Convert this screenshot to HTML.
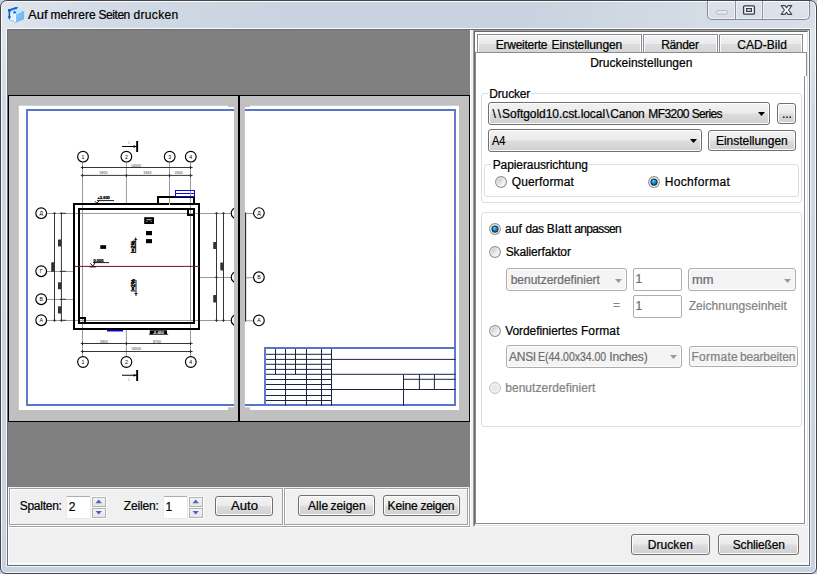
<!DOCTYPE html>
<html lang="de"><head><meta charset="utf-8"><title>Auf mehrere Seiten drucken</title>
<style>
html,body{margin:0;padding:0}
body{width:817px;height:574px;overflow:hidden;position:relative;background:#c3cfdc;font-family:"Liberation Sans",sans-serif;font-size:12px;line-height:14px;color:#000}
body>div,body>span,body>svg{position:absolute;box-sizing:content-box}
.t{white-space:pre;line-height:14px;-webkit-text-stroke:.22px currentColor}
.frame{left:0;top:0;width:815px;height:572px;border:1px solid #42464c;border-radius:7px 7px 6px 6px;background:linear-gradient(#dfe5ec 0,#dfe5ec 30px,#cfd9e5 110px,#c8d3e0 100%);box-shadow:inset 0 0 0 1px rgba(255,255,255,.85)}
.tb{left:2px;top:2px;width:813px;height:26px;border-radius:5px 5px 0 0;background:linear-gradient(90deg,#e0e6ed 0,#d2dbe6 90px,#c8d3df 300px,#c8d3df 520px,#d4dce6 700px,#d8dfe8 813px)}
.btn{border:1px solid #707070;border-radius:3px;background:linear-gradient(#f2f2f2 0,#ebebeb 48%,#dddddd 52%,#cfcfcf 100%);box-shadow:inset 0 0 0 1px rgba(255,255,255,.9)}
.btn.dis{border-color:#adadad;background:#f4f4f4;box-shadow:inset 0 0 0 1px #fcfcfc}
.tab{border:1px solid #898c95;border-bottom:none;background:linear-gradient(#f2f2f2 0,#ebebeb 50%,#dddddd 52%,#d5d5d5 100%);box-shadow:inset 1px 1px 0 rgba(255,255,255,.9),inset -1px 0 0 rgba(255,255,255,.9)}
.sp{width:12px;height:8px;border:1px solid #b2b2b2;background:linear-gradient(#f3f3f3,#e6e6e6)}

</style></head>
<body>
<svg width="0" height="0" style="position:absolute"><defs>
<linearGradient id="rg" x1="0" y1="0" x2="1" y2="1"><stop offset="0" stop-color="#b9c0c6"/><stop offset=".5" stop-color="#e2e5e8"/><stop offset="1" stop-color="#ffffff"/></linearGradient>
<radialGradient id="rb" cx=".4" cy=".3" r=".75"><stop offset="0" stop-color="#a8e6fa"/><stop offset=".28" stop-color="#2fa6e2"/><stop offset=".7" stop-color="#1b78b8"/><stop offset="1" stop-color="#154a78"/></radialGradient>
</defs></svg>
<div class="frame"></div>
<div class="tb"></div>
<div style="left:6px;top:28px;width:803px;height:537px;border:1px solid rgba(255,255,255,.75);"></div>
<div style="left:7px;top:29px;width:801px;height:535px;border:1px solid #6b6f76;background:#f0f0f0;"></div>
<div style="left:8px;top:30px;width:799px;height:533px;border:1px solid #fff;border-top:none;"></div>
<svg style="left:0;top:0" width="34" height="28" viewBox="0 0 34 28">
<defs><linearGradient id="ic1" x1="0" y1="0" x2="1" y2="0"><stop offset="0" stop-color="#f4faff"/><stop offset="1" stop-color="#cfe7ff"/></linearGradient>
<linearGradient id="ic2" x1="0" y1="0" x2="1" y2="1"><stop offset="0" stop-color="#8ccaff"/><stop offset="1" stop-color="#62b2fb"/></linearGradient></defs>
<path d="M10.3,11.8L19,7.6L24.1,10.1L15.7,14.3Z" fill="#c4e3ff"/>
<path d="M10.3,11.8L15.7,14.3V22.2L10.3,19.7Z" fill="url(#ic1)"/>
<path d="M15.7,14.3L24.1,10.1V18.5L15.7,22.2Z" fill="url(#ic2)"/>
<path d="M10.4,20L15.7,22.5L24,18.8" fill="none" stroke="#7f93ab" stroke-width=".8" opacity=".7"/>
<path d="M15.3,14.4V22" stroke="#fff" stroke-width="1"/>
<path d="M15.7,14.1L24,10" stroke="#e8f4ff" stroke-width=".8"/>
<path d="M9.4,10V18" stroke="#0b62c6" stroke-width="1.6"/>
<path d="M7.8,16.2H11L9.4,19.9Z" fill="#0b62c6"/>
<path d="M8.6,10.4L16.5,7.8" stroke="#0b62c6" stroke-width="1.8"/>
<path d="M8,9.2h3.2v2.2H8Z" fill="#0b62c6"/>
<path d="M14.4,7.3L18.1,6.9L16.2,9.5Z" fill="#0b62c6"/>
<path d="M12.9,13.3H16.6L14.4,10.8Z" fill="#0b62c6"/>
</svg>

<span class="t" style="left:28.4px;top:8px;transform:scaleX(1.0879);transform-origin:0 0;">Auf</span>
<span class="t" style="left:50.5px;top:8px;letter-spacing:0.085px;">mehrere</span>
<span class="t" style="left:98.5px;top:8px;letter-spacing:-0.446px;">Seiten</span>
<span class="t" style="left:133.5px;top:8px;letter-spacing:0.333px;">drucken</span>
<div style="left:707px;top:1px;width:101px;height:18px;border:1px solid #848b96;border-top:none;border-radius:0 0 5px 5px;box-shadow:inset 0 0 0 1px rgba(255,255,255,.55);background:linear-gradient(rgba(255,255,255,.18),rgba(255,255,255,.05))"></div>
<div style="left:735px;top:1px;width:1px;height:18px;background:#8d949e;box-shadow:1px 0 0 rgba(255,255,255,.5),-1px 0 0 rgba(255,255,255,.5)"></div>
<div style="left:762px;top:1px;width:1px;height:18px;background:#8d949e;box-shadow:1px 0 0 rgba(255,255,255,.5),-1px 0 0 rgba(255,255,255,.5)"></div>
<svg style="left:707px;top:0" width="103" height="20" viewBox="707 0 103 20">
<rect x="716.5" y="10.5" width="11" height="3.6" rx="1" fill="#e6eaef" stroke="#b3bac4" stroke-width="1"/>
<rect x="743.6" y="5.8" width="10.8" height="8.4" rx="1" fill="#f4f6f8" stroke="#363b46" stroke-width="1.3"/>
<rect x="746.6" y="8.6" width="4.8" height="2.8" fill="#e9ecf0" stroke="#363b46" stroke-width="1.2"/>
<path d="M781.2,5.6h3.8l1.5,2.3l1.5,-2.3h3.8l-3.3,4.4l3.3,4.4h-3.8l-1.5,-2.3l-1.5,2.3h-3.8l3.3,-4.4Z" fill="#fdfdfd" stroke="#40464f" stroke-width="1.1" stroke-linejoin="round"/>
</svg>

<div style="left:7px;top:29px;width:461px;height:496px;border:1px solid #a0a0a0;border-top-color:transparent;border-left-color:transparent;"></div>
<div style="left:8px;top:30px;width:461px;height:496px;border:1px solid #fff;"></div>
<div style="left:8px;top:30px;width:462px;height:457px;background:#808080;"></div>
<div style="left:8px;top:95px;width:460px;height:325px;border:1px solid #000;background:#c0c0c0;"></div>
<div style="left:238px;top:95px;width:2px;height:327px;background:#000;"></div>
<svg style="left:9px;top:96px" width="460" height="325" viewBox="9 96 460 325" font-family="'Liberation Sans',sans-serif">
<defs><clipPath id="p1"><polygon points="18.8,105.7 228,105.7 228,107 234,107 234,407.2 228,407.2 228,410.1 18.8,410.1"/></clipPath><clipPath id="p2"><polygon points="244.9,107 250,107 250,105.7 459,105.7 459,410.1 250,410.1 250,407.2 244.9,407.2"/></clipPath></defs>
<g clip-path="url(#p1)">
<rect x="18" y="105" width="217" height="306" fill="#fff"/>
<path d="M235,110H27V405H235" fill="none" stroke="#5973c9" stroke-width="1.9"/>
<path d="M82.5,162.3L82.5,356.5" stroke="#9a9a9a" stroke-width="1" fill="none"/>
<path d="M190.5,162.3L190.5,356.5" stroke="#9a9a9a" stroke-width="1" fill="none"/>
<path d="M126.4,162.3L126.4,203" stroke="#9a9a9a" stroke-width="1" fill="none"/>
<path d="M126.4,330L126.4,356.5" stroke="#9a9a9a" stroke-width="1" fill="none"/>
<path d="M169.5,162.3L169.5,203" stroke="#9a9a9a" stroke-width="1" fill="none"/>
<path d="M46.7,213.5L235,213.5" stroke="#9a9a9a" stroke-width="1" fill="none"/>
<path d="M46.7,320.5L235,320.5" stroke="#9a9a9a" stroke-width="1" fill="none"/>
<path d="M46.7,271.5L73,271.5" stroke="#9a9a9a" stroke-width="1" fill="none"/>
<path d="M46.7,299.5L73,299.5" stroke="#9a9a9a" stroke-width="1" fill="none"/>
<path d="M200,277.5L231,277.5" stroke="#9a9a9a" stroke-width="1" fill="none"/>
<path d="M80.8,167.5L192.6,167.5" stroke="#2a2a2a" stroke-width="0.95" fill="none"/>
<path d="M80.8,175.4L192.6,175.4" stroke="#2a2a2a" stroke-width="0.95" fill="none"/>
<path d="M80.8,343.5L192.6,343.5" stroke="#2a2a2a" stroke-width="0.95" fill="none"/>
<path d="M80.8,351.5L192.6,351.5" stroke="#2a2a2a" stroke-width="0.95" fill="none"/>
<path d="M54.5,212.3L54.5,321.9" stroke="#2a2a2a" stroke-width="0.95" fill="none"/>
<path d="M61.4,212.3L61.4,321.9" stroke="#2a2a2a" stroke-width="0.95" fill="none"/>
<path d="M216.5,212.3L216.5,321.9" stroke="#2a2a2a" stroke-width="0.95" fill="none"/>
<path d="M223.5,212.3L223.5,321.9" stroke="#2a2a2a" stroke-width="0.95" fill="none"/>
<path d="M82.5,166.0L82.5,169.0" stroke="#2a2a2a" stroke-width="1.1" fill="none"/>
<path d="M82.5,173.9L82.5,176.9" stroke="#2a2a2a" stroke-width="1.1" fill="none"/>
<path d="M82.5,342.0L82.5,345.0" stroke="#2a2a2a" stroke-width="1.1" fill="none"/>
<path d="M82.5,350.0L82.5,353.0" stroke="#2a2a2a" stroke-width="1.1" fill="none"/>
<path d="M190.5,166.0L190.5,169.0" stroke="#2a2a2a" stroke-width="1.1" fill="none"/>
<path d="M190.5,173.9L190.5,176.9" stroke="#2a2a2a" stroke-width="1.1" fill="none"/>
<path d="M190.5,342.0L190.5,345.0" stroke="#2a2a2a" stroke-width="1.1" fill="none"/>
<path d="M190.5,350.0L190.5,353.0" stroke="#2a2a2a" stroke-width="1.1" fill="none"/>
<path d="M126.4,173.9L126.4,176.9" stroke="#2a2a2a" stroke-width="1.1" fill="none"/>
<path d="M169.5,173.9L169.5,176.9" stroke="#2a2a2a" stroke-width="1.1" fill="none"/>
<path d="M126.4,342.0L126.4,345.0" stroke="#2a2a2a" stroke-width="1.1" fill="none"/>
<path d="M52.9,213.3L55.9,213.3" stroke="#2a2a2a" stroke-width="0.9" fill="none"/>
<path d="M52.9,320.3L55.9,320.3" stroke="#2a2a2a" stroke-width="0.9" fill="none"/>
<path d="M59.8,213.3L66.0,213.3" stroke="#2a2a2a" stroke-width="0.9" fill="none"/>
<path d="M59.8,271.3L66.0,271.3" stroke="#2a2a2a" stroke-width="0.9" fill="none"/>
<path d="M59.8,299.3L66.0,299.3" stroke="#2a2a2a" stroke-width="0.9" fill="none"/>
<path d="M59.8,320.3L66.0,320.3" stroke="#2a2a2a" stroke-width="0.9" fill="none"/>
<path d="M214.9,213.3L217.9,213.3" stroke="#2a2a2a" stroke-width="0.9" fill="none"/>
<path d="M214.9,277.3L217.9,277.3" stroke="#2a2a2a" stroke-width="0.9" fill="none"/>
<path d="M214.9,320.3L217.9,320.3" stroke="#2a2a2a" stroke-width="0.9" fill="none"/>
<path d="M221.9,213.3L224.9,213.3" stroke="#2a2a2a" stroke-width="0.9" fill="none"/>
<path d="M221.9,320.3L224.9,320.3" stroke="#2a2a2a" stroke-width="0.9" fill="none"/>
<circle cx="83" cy="156.7" r="5.35" fill="#fff" stroke="#000" stroke-width="1.15"/>
<text x="83" y="158.6" font-size="5.2" text-anchor="middle" fill="#000">1</text>
<circle cx="126.4" cy="156.7" r="5.35" fill="#fff" stroke="#000" stroke-width="1.15"/>
<text x="126.4" y="158.6" font-size="5.2" text-anchor="middle" fill="#000">2</text>
<circle cx="169.7" cy="156.7" r="5.35" fill="#fff" stroke="#000" stroke-width="1.15"/>
<text x="169.7" y="158.6" font-size="5.2" text-anchor="middle" fill="#000">3</text>
<circle cx="190.8" cy="156.7" r="5.35" fill="#fff" stroke="#000" stroke-width="1.15"/>
<text x="190.8" y="158.6" font-size="5.2" text-anchor="middle" fill="#000">4</text>
<circle cx="83" cy="362" r="5.35" fill="#fff" stroke="#000" stroke-width="1.15"/>
<text x="83" y="363.9" font-size="5.2" text-anchor="middle" fill="#000">1</text>
<circle cx="126.4" cy="362" r="5.35" fill="#fff" stroke="#000" stroke-width="1.15"/>
<text x="126.4" y="363.9" font-size="5.2" text-anchor="middle" fill="#000">2</text>
<circle cx="190.8" cy="362" r="5.35" fill="#fff" stroke="#000" stroke-width="1.15"/>
<text x="190.8" y="363.9" font-size="5.2" text-anchor="middle" fill="#000">4</text>
<circle cx="41.2" cy="213.2" r="5.35" fill="#fff" stroke="#000" stroke-width="1.15"/>
<text x="41.2" y="215.1" font-size="5.2" text-anchor="middle" fill="#000">Д</text>
<circle cx="41.2" cy="271.2" r="5.35" fill="#fff" stroke="#000" stroke-width="1.15"/>
<text x="41.2" y="273.09999999999997" font-size="5.2" text-anchor="middle" fill="#000">Г</text>
<circle cx="41.2" cy="299.2" r="5.35" fill="#fff" stroke="#000" stroke-width="1.15"/>
<text x="41.2" y="301.09999999999997" font-size="5.2" text-anchor="middle" fill="#000">В</text>
<circle cx="41.2" cy="320.2" r="5.35" fill="#fff" stroke="#000" stroke-width="1.15"/>
<text x="41.2" y="322.09999999999997" font-size="5.2" text-anchor="middle" fill="#000">А</text>
<circle cx="236.6" cy="213.2" r="5.35" fill="#fff" stroke="#000" stroke-width="1.15"/>
<circle cx="236.6" cy="277.2" r="5.35" fill="#fff" stroke="#000" stroke-width="1.15"/>
<circle cx="236.6" cy="320.2" r="5.35" fill="#fff" stroke="#000" stroke-width="1.15"/>
<path d="M122,146.5L137,146.5" stroke="#000" stroke-width="1.1" fill="none"/>
<rect x="136.2" y="141" width="1.9" height="11" fill="#000"/>
<path d="M133.6,145.1L136.4,146.5L133.6,147.9Z" fill="#000"/>
<text x="129" y="143.6" font-size="4.2" text-anchor="middle" fill="#8a93b8">1</text>
<path d="M122,375.3L137,375.3" stroke="#000" stroke-width="1.1" fill="none"/>
<rect x="136.2" y="370" width="1.9" height="11" fill="#000"/>
<path d="M133.6,373.90000000000003L136.4,375.3L133.6,376.7Z" fill="#000"/>
<text x="129" y="380.6" font-size="4.2" text-anchor="middle" fill="#8a93b8">1</text>
<rect x="74" y="204" width="125" height="125" fill="none" stroke="#000" stroke-width="2"/>
<rect x="79" y="209" width="115" height="114" fill="none" stroke="#000" stroke-width="2"/>
<path d="M158,204V197H194V204" fill="none" stroke="#000" stroke-width="2"/>
<rect x="175.5" y="190.5" width="19" height="6" fill="none" stroke="#0a0ae0" stroke-width="1"/>
<path d="M175.5,193.5L194.5,193.5" stroke="#0a0ae0" stroke-width="1" fill="none"/>
<rect x="188" y="209" width="6" height="6" fill="#fff" stroke="#000" stroke-width="2"/>
<rect x="79" y="318" width="6" height="5" fill="#fff" stroke="#000" stroke-width="2"/>
<path d="M190.5,210L190.5,214" stroke="#9a9a9a" stroke-width="1" fill="none"/>
<path d="M82.5,319L82.5,322" stroke="#9a9a9a" stroke-width="1" fill="none"/>
<path d="M80,320.5L84,320.5" stroke="#9a9a9a" stroke-width="1" fill="none"/>
<path d="M189,213.5L193,213.5" stroke="#9a9a9a" stroke-width="1" fill="none"/>
<path d="M190.5,191L190.5,196" stroke="#8f8fd8" stroke-width="1" fill="none"/>
<path d="M190.5,198L190.5,203" stroke="#9a9a9a" stroke-width="1" fill="none"/>
<path d="M169.5,198L169.5,203" stroke="#9a9a9a" stroke-width="1" fill="none"/>
<path d="M169.5,203L169.5,205" stroke="#c8c8c8" stroke-width="1" fill="none"/>
<path d="M74.5,266.4L199.8,266.4" stroke="#74112d" stroke-width="1" fill="none"/>
<rect x="144.2" y="217.2" width="9.8" height="6.8" fill="#000"/>
<path d="M146.4,219.7H151.6M146.4,221.6h1M150.6,221.6h1" stroke="#fff" stroke-width="0.8"/>
<rect x="146" y="231" width="6" height="4.2" fill="#000"/>
<rect x="146" y="239.1" width="6" height="4.1" fill="#000"/>
<rect x="100.3" y="245.2" width="5.8" height="3.7" fill="#000"/>
<rect x="51.2" y="262.3" width="3.3" height="9.5" rx="0.6" fill="#333"/>
<rect x="58" y="239.4" width="3.3" height="7" rx="0.6" fill="#333"/>
<rect x="58" y="282.3" width="3.3" height="7" rx="0.6" fill="#333"/>
<rect x="58" y="306.3" width="3.3" height="7.3" rx="0.6" fill="#333"/>
<rect x="213.2" y="242" width="3.3" height="7" rx="0.6" fill="#333"/>
<rect x="220.3" y="262.4" width="3.3" height="8" rx="0.6" fill="#333"/>
<rect x="213.2" y="295" width="3.3" height="7.5" rx="0.6" fill="#333"/>
<path d="M97,200.6L114,200.6" stroke="#000" stroke-width="0.9" fill="none"/>
<path d="M95,201.2L97,203.4L99,200.6" stroke="#000" stroke-width="0.9" fill="none"/>
<text x="97.5" y="199.4" font-size="4" fill="#000" font-weight="bold" stroke="#000" stroke-width=".25">+3.600</text>
<path d="M93,262.6L109,262.6" stroke="#000" stroke-width="0.9" fill="none"/>
<path d="M90.4,263.4L92.8,266.2L95.2,262.6M89.6,266.9H96" stroke="#000" stroke-width="0.9" fill="none"/>
<text x="93.5" y="261.6" font-size="4" fill="#000" font-weight="bold" stroke="#000" stroke-width=".25">0.000</text>
<path d="M135.7,237.4L135.7,253" stroke="#000" stroke-width="0.9" fill="none"/>
<path d="M134.2,239.6H137.2" fill="none" stroke="#000" stroke-width="0.9"/>
<text transform="translate(135,253.2) rotate(-90)" font-size="5.4" font-weight="bold" fill="#000" stroke="#000" stroke-width=".45">i=2%</text>
<path d="M136,280L136,296" stroke="#000" stroke-width="0.9" fill="none"/>
<path d="M134.4,293.6H137.6" fill="none" stroke="#000" stroke-width="0.9"/>
<text transform="translate(135.3,291.6) rotate(-90)" font-size="5.4" font-weight="bold" fill="#000" stroke="#000" stroke-width=".45">i=2%</text>
<text x="103.6" y="174" font-size="3.6" text-anchor="middle" font-weight="bold" fill="#8d8178">5800</text>
<text x="147.6" y="174" font-size="3.6" text-anchor="middle" font-weight="bold" fill="#8d8178">5800</text>
<text x="178.8" y="174" font-size="3.6" text-anchor="middle" font-weight="bold" fill="#8d8178">2900</text>
<text x="136" y="166.6" font-size="3.6" text-anchor="middle" font-weight="bold" fill="#8d8178">14500</text>
<text x="104" y="342.8" font-size="3.6" text-anchor="middle" font-weight="bold" fill="#8d8178">5800</text>
<text x="157" y="342.8" font-size="3.6" text-anchor="middle" font-weight="bold" fill="#8d8178">8700</text>
<text x="136" y="350" font-size="3.6" text-anchor="middle" font-weight="bold" fill="#8d8178">14500</text>
<rect x="149.8" y="330.3" width="17.2" height="3.9" fill="#000"/>
<path d="M149,334.3L168.2,334.3" stroke="#000" stroke-width="0.8" fill="none"/>
<text x="158.4" y="333.7" font-size="4" text-anchor="middle" fill="#fff" font-weight="bold">-0.450</text>
<path d="M107,330.7L123,330.7" stroke="#0a0ad8" stroke-width="1.5" fill="none"/>
</g>
<g clip-path="url(#p2)">
<rect x="244" y="105" width="216" height="306" fill="#fff"/>
<path d="M244,110H455V405H244" fill="none" stroke="#5973c9" stroke-width="1.9"/>
<path d="M455,348H265V405" fill="none" stroke="#5973c9" stroke-width="1.9"/>
<path d="M245.6,212.6L245.6,321.6" stroke="#222" stroke-width="1.1" fill="none"/>
<path d="M246,213.5L253.5,213.5" stroke="#9a9a9a" stroke-width="1" fill="none"/>
<circle cx="258.9" cy="213.1" r="5.35" fill="#fff" stroke="#000" stroke-width="1.15"/>
<text x="258.9" y="215.0" font-size="5.2" text-anchor="middle" fill="#000">Д</text>
<path d="M246,277.7L253.5,277.7" stroke="#9a9a9a" stroke-width="1" fill="none"/>
<circle cx="258.9" cy="277.3" r="5.35" fill="#fff" stroke="#000" stroke-width="1.15"/>
<text x="258.9" y="279.2" font-size="5.2" text-anchor="middle" fill="#000">В</text>
<path d="M246,320.8L253.5,320.8" stroke="#9a9a9a" stroke-width="1" fill="none"/>
<circle cx="258.9" cy="320.40000000000003" r="5.35" fill="#fff" stroke="#000" stroke-width="1.15"/>
<text x="258.9" y="322.3" font-size="5.2" text-anchor="middle" fill="#000">А</text>
<path d="M275.5,349L275.5,374.4" stroke="#1d2442" stroke-width="1" fill="none"/>
<path d="M295.5,349L295.5,374.4" stroke="#1d2442" stroke-width="1" fill="none"/>
<path d="M285.5,349L285.5,405.6" stroke="#1d2442" stroke-width="1" fill="none"/>
<path d="M306.5,349L306.5,405.6" stroke="#1d2442" stroke-width="1" fill="none"/>
<path d="M321.5,349L321.5,405.6" stroke="#1d2442" stroke-width="1" fill="none"/>
<path d="M331.5,349L331.5,405.6" stroke="#1d2442" stroke-width="1" fill="none"/>
<path d="M403.5,374.4L403.5,405.6" stroke="#1d2442" stroke-width="1" fill="none"/>
<path d="M419.4,374.4L419.4,389.5" stroke="#1d2442" stroke-width="1" fill="none"/>
<path d="M434.4,374.4L434.4,389.5" stroke="#1d2442" stroke-width="1" fill="none"/>
<path d="M266,354.3L331.5,354.3" stroke="#1d2442" stroke-width="1" fill="none"/>
<path d="M266,359.4L331.5,359.4" stroke="#1d2442" stroke-width="1" fill="none"/>
<path d="M266,364.3L331.5,364.3" stroke="#1d2442" stroke-width="1" fill="none"/>
<path d="M266,369.4L331.5,369.4" stroke="#1d2442" stroke-width="1" fill="none"/>
<path d="M266,374.3L331.5,374.3" stroke="#1d2442" stroke-width="1" fill="none"/>
<path d="M266,379.5L331.5,379.5" stroke="#1d2442" stroke-width="1" fill="none"/>
<path d="M266,384.5L331.5,384.5" stroke="#1d2442" stroke-width="1" fill="none"/>
<path d="M266,389.5L331.5,389.5" stroke="#1d2442" stroke-width="1" fill="none"/>
<path d="M266,395.5L331.5,395.5" stroke="#1d2442" stroke-width="1" fill="none"/>
<path d="M266,400.5L331.5,400.5" stroke="#1d2442" stroke-width="1" fill="none"/>
<path d="M331.5,359.4L455.6,359.4" stroke="#1d2442" stroke-width="1" fill="none"/>
<path d="M331.5,374.3L455.6,374.3" stroke="#1d2442" stroke-width="1" fill="none"/>
<path d="M331.5,389.5L455.6,389.5" stroke="#1d2442" stroke-width="1" fill="none"/>
<path d="M403.5,379.3L455.6,379.3" stroke="#1d2442" stroke-width="1" fill="none"/>
</g>
</svg>
<div style="left:10px;top:489px;width:272px;height:35px;border:1px solid #fff;"></div>
<div style="left:9px;top:488px;width:272px;height:35px;border:1px solid #a0a0a0;"></div>
<div style="left:285px;top:489px;width:182px;height:35px;border:1px solid #fff;"></div>
<div style="left:284px;top:488px;width:182px;height:35px;border:1px solid #a0a0a0;"></div>
<span class="t" style="left:19.7px;top:499px;letter-spacing:-0.264px;">Spalten:</span>
<div style="left:66px;top:496px;width:23px;height:21px;border:1px solid #e3e9ef;border-top-color:#abadb3;background:#fff;border-radius:2px;"></div>
<div style="left:91px;top:496px;width:16px;height:23px;background:#fff;"></div>
<div class="sp" style="left:92px;top:497px"></div>
<div class="sp" style="left:92px;top:508px"></div>
<svg style="left:92px;top:496px" width="14" height="23"><path d="M3.5 7.2 L6.7 3.6 L9.9 7.2 Z M3.5 15.1 L6.7 18.6 L9.9 15.1 Z" fill="#4f60c6"/></svg>
<span class="t" style="left:68.7px;top:500px;">2</span>
<span class="t" style="left:123.7px;top:499px;letter-spacing:-0.139px;">Zeilen:</span>
<div style="left:163px;top:496px;width:23px;height:21px;border:1px solid #e3e9ef;border-top-color:#abadb3;background:#fff;border-radius:2px;"></div>
<div style="left:188px;top:496px;width:16px;height:23px;background:#fff;"></div>
<div class="sp" style="left:189px;top:497px"></div>
<div class="sp" style="left:189px;top:508px"></div>
<svg style="left:189px;top:496px" width="14" height="23"><path d="M3.5 7.2 L6.7 3.6 L9.9 7.2 Z M3.5 15.1 L6.7 18.6 L9.9 15.1 Z" fill="#4f60c6"/></svg>
<span class="t" style="left:165.5px;top:500px;">1</span>
<div class="btn" style="left:215px;top:496px;width:56px;height:18px"></div>
<span class="t" style="left:230.7px;top:499.4px;transform:scaleX(1.0937);transform-origin:0 0;">Auto</span>
<div class="btn" style="left:298px;top:495px;width:75px;height:19px"></div>
<span class="t" style="left:308.0px;top:499px;letter-spacing:0.061px;">Alle</span>
<span class="t" style="left:330.5px;top:499px;letter-spacing:-0.055px;">zeigen</span>
<div class="btn" style="left:383px;top:495px;width:75px;height:19px"></div>
<span class="t" style="left:387.5px;top:499px;letter-spacing:-0.126px;">Keine</span>
<span class="t" style="left:420.5px;top:499px;letter-spacing:-0.275px;">zeigen</span>
<div style="left:473px;top:30px;width:334px;height:495px;border:1px solid #a0a0a0;border-right-color:#fff;border-bottom-color:#fff;background:#fff;"></div>
<div style="left:474px;top:31px;width:332px;height:493px;border:1px solid #696969;border-right-color:#e3e3e3;border-bottom-color:#e3e3e3;"></div>
<div class="tab" style="left:477px;top:34px;width:163px;height:17px"></div>
<span class="t" style="left:495.8px;top:38px;letter-spacing:-0.259px;">Erweiterte</span>
<span class="t" style="left:551.5px;top:38px;letter-spacing:-0.114px;">Einstellungen</span>
<div class="tab" style="left:643px;top:34px;width:73px;height:17px"></div>
<span class="t" style="left:661.2px;top:38px;letter-spacing:-0.332px;">Ränder</span>
<div class="tab" style="left:719px;top:34px;width:82px;height:17px"></div>
<span class="t" style="left:737.2px;top:38px;letter-spacing:0.051px;">CAD-Bild</span>
<div style="left:475px;top:52px;width:332px;height:1px;background:#898c95;"></div>
<div style="left:475px;top:52px;width:1px;height:472px;background:#898c95;"></div>
<div style="left:475px;top:523px;width:330px;height:1px;background:#898c95;"></div>
<div style="left:806px;top:52px;width:1px;height:24px;background:#898c95;"></div>
<div style="left:804px;top:76px;width:1px;height:448px;background:#898c95;"></div>
<span class="t" style="left:590.2px;top:56px;letter-spacing:0.008px;">Druckeinstellungen</span>
<div style="left:481px;top:93px;width:319px;height:108px;border:1px solid #d5dfe5;border-radius:3px;"></div>
<div style="left:487.6px;top:93px;width:43.8px;height:1px;background:#fff;"></div>
<span class="t" style="left:489.3px;top:87px;letter-spacing:-0.169px;">Drucker</span>
<div style="left:484px;top:164px;width:313px;height:31px;border:1px solid #d5dfe5;border-radius:3px;"></div>
<div style="left:491px;top:164px;width:98px;height:1px;background:#fff;"></div>
<span class="t" style="left:492.7px;top:158px;letter-spacing:-0.096px;">Papierausrichtung</span>
<div style="left:481px;top:212px;width:319px;height:213px;border:1px solid #d5dfe5;border-radius:3px;"></div>
<div class="btn" style="left:488px;top:102px;width:280px;height:21px"></div>
<span class="t" style="left:492.6px;top:107px;">\</span>
<span class="t" style="left:497.8px;top:107px;">\</span>
<span class="t" style="left:502.09999999999997px;top:107px;letter-spacing:-0.056px;">Softgold10.cst.local</span>
<span class="t" style="left:606px;top:107px;">\</span>
<span class="t" style="left:610.3000000000001px;top:107px;letter-spacing:-0.219px;">Canon</span>
<span class="t" style="left:648.3000000000001px;top:107px;letter-spacing:-0.566px;">MF3200</span>
<span class="t" style="left:691.7px;top:107px;letter-spacing:-0.623px;">Series</span>
<svg style="left:758.3px;top:112.3px" width="7" height="4"><path d="M0 0H7L3.5 4Z" fill="#000"/></svg>
<div class="btn" style="left:777px;top:103px;width:17px;height:19px"></div>
<span class="t" style="left:782.0px;top:107px;letter-spacing:-0.108px;">...</span>
<div class="btn" style="left:488px;top:129px;width:212px;height:21px"></div>
<span class="t" style="left:492px;top:133.5px;transform:scaleX(0.9191);transform-origin:0 0;">A4</span>
<svg style="left:690.3px;top:139.3px" width="7" height="4"><path d="M0 0H7L3.5 4Z" fill="#000"/></svg>
<div class="btn" style="left:708px;top:130px;width:86px;height:19px"></div>
<span class="t" style="left:716.0px;top:133.5px;letter-spacing:-0.030px;">Einstellungen</span>
<svg style="left:494px;top:175px" width="14" height="14"><circle cx="7" cy="7" r="5.4" fill="#f3f3f3" stroke="#8e8f8f" stroke-width="1.05"/><circle cx="7" cy="7" r="3.7" fill="url(#rg)"/></svg>
<span class="t" style="left:511.7px;top:175px;letter-spacing:0.168px;">Querformat</span>
<svg style="left:647px;top:175px" width="14" height="14"><circle cx="7" cy="7" r="5.4" fill="#f3f3f3" stroke="#8e8f8f" stroke-width="1.05"/><circle cx="7" cy="7" r="3" fill="url(#rb)" stroke="#14395c" stroke-width="1.25"/></svg>
<span class="t" style="left:664.7px;top:175px;letter-spacing:0.352px;">Hochformat</span>
<svg style="left:488px;top:222px" width="14" height="14"><circle cx="7" cy="7" r="5.4" fill="#f3f3f3" stroke="#8e8f8f" stroke-width="1.05"/><circle cx="7" cy="7" r="3" fill="url(#rb)" stroke="#14395c" stroke-width="1.25"/></svg>
<span class="t" style="left:505.09999999999997px;top:222px;letter-spacing:0.056px;">auf</span>
<span class="t" style="left:525.4000000000001px;top:222px;letter-spacing:-0.430px;">das</span>
<span class="t" style="left:546.7px;top:222px;letter-spacing:0.221px;">Blatt</span>
<span class="t" style="left:574.3000000000001px;top:222px;letter-spacing:-0.664px;">anpassen</span>
<svg style="left:488px;top:245px" width="14" height="14"><circle cx="7" cy="7" r="5.4" fill="#f3f3f3" stroke="#8e8f8f" stroke-width="1.05"/><circle cx="7" cy="7" r="3.7" fill="url(#rg)"/></svg>
<span class="t" style="left:505.7px;top:245px;letter-spacing:-0.125px;">Skalierfaktor</span>
<div class="btn dis" style="left:506px;top:268px;width:119px;height:21px"></div>
<span class="t" style="left:510.7px;top:272.5px;letter-spacing:-0.012px;color:#6d6d6d;">benutzerdefiniert</span>
<svg style="left:615px;top:279px" width="7" height="4"><path d="M0 0H7L3.5 4Z" fill="#9a9a9a"/></svg>
<div style="left:633px;top:268px;width:47px;height:21px;border:1px solid #afafaf;background:#fff;border-radius:2px;"></div>
<span class="t" style="left:635.5px;top:272px;color:#6d6d6d;">1</span>
<div class="btn dis" style="left:688px;top:268px;width:106px;height:21px"></div>
<span class="t" style="left:692px;top:272.5px;transform:scaleX(1.0750);transform-origin:0 0;color:#6d6d6d;">mm</span>
<svg style="left:784px;top:278.5px" width="7" height="4"><path d="M0 0H7L3.5 4Z" fill="#9a9a9a"/></svg>
<span class="t" style="left:613px;top:298px;color:#838383;">=</span>
<div style="left:633px;top:295px;width:47px;height:21px;border:1px solid #afafaf;background:#fff;border-radius:2px;"></div>
<span class="t" style="left:635.5px;top:299px;color:#6d6d6d;">1</span>
<span class="t" style="left:688.7px;top:299px;letter-spacing:0.050px;color:#838383;">Zeichnungseinheit</span>
<svg style="left:488px;top:324px" width="14" height="14"><circle cx="7" cy="7" r="5.4" fill="#f3f3f3" stroke="#8e8f8f" stroke-width="1.05"/><circle cx="7" cy="7" r="3.7" fill="url(#rg)"/></svg>
<span class="t" style="left:505.2px;top:324px;letter-spacing:-0.076px;">Vordefiniertes</span>
<span class="t" style="left:580.9000000000001px;top:324px;letter-spacing:0.117px;">Format</span>
<div class="btn dis" style="left:506px;top:345px;width:174px;height:21px"></div>
<span class="t" style="left:509.0px;top:350px;letter-spacing:-0.272px;color:#6d6d6d;">ANSI</span>
<span class="t" style="left:538.1px;top:350px;transform:scaleX(0.8737);transform-origin:0 0;color:#6d6d6d;">E(44.00x34.00</span>
<span class="t" style="left:609.3000000000001px;top:350px;letter-spacing:-0.160px;color:#6d6d6d;">Inches)</span>
<svg style="left:670.3px;top:355.2px" width="7" height="4"><path d="M0 0H7L3.5 4Z" fill="#9a9a9a"/></svg>
<div class="btn dis" style="left:689px;top:346px;width:107px;height:19px"></div>
<span class="t" style="left:691.5px;top:349.7px;letter-spacing:0.252px;color:#838383;">Formate</span>
<span class="t" style="left:739.9000000000001px;top:349.7px;letter-spacing:-0.135px;color:#838383;">bearbeiten</span>
<svg style="left:488px;top:381px" width="14" height="14"><circle cx="7" cy="7" r="5.4" fill="#f6f6f6" stroke="#bdbdbd"/><circle cx="7" cy="7" r="3.6" fill="#e9e9e9"/></svg>
<span class="t" style="left:505.2px;top:381px;letter-spacing:0.051px;color:#838383;">benutzerdefiniert</span>
<div class="btn" style="left:631px;top:534px;width:77px;height:19px"></div>
<span class="t" style="left:647.7px;top:538px;letter-spacing:0.085px;">Drucken</span>
<div class="btn" style="left:718px;top:534px;width:79px;height:19px"></div>
<span class="t" style="left:732.7px;top:538px;letter-spacing:-0.147px;">Schließen</span>
</body></html>
